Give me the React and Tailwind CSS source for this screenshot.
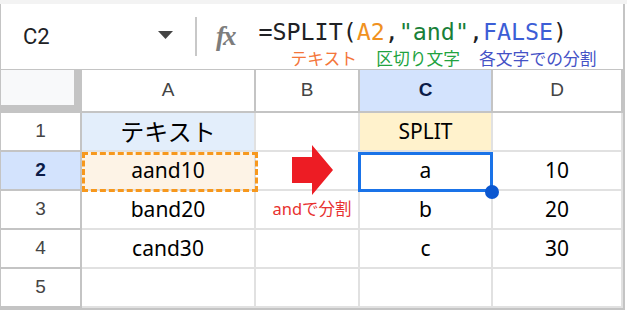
import React from "react";

const cellFont = { fontFamily: '"Noto Sans", "Noto Sans CJK JP", sans-serif' };

const cols = [
  { key: "A", w: "w-[174px]" },
  { key: "B", w: "w-[104px]" },
  { key: "C", w: "w-[133px]" },
  { key: "D", w: "w-[130px]" },
];

const rows = [
  { n: "1", cells: [{ t: "テキスト", bg: "bg-[#e3eefb]", size: "text-[24px]" }, {}, { t: "SPLIT", bg: "bg-[#fff2cc]" }, {}] },
  { n: "2", active: true, cells: [{ t: "aand10", bg: "bg-[#fdf3e6]" }, {}, { t: "a" }, { t: "10" }] },
  {
    n: "3",
    cells: [
      { t: "band20" },
      { t: "andで分割", size: "text-[16.5px] pl-[10px] whitespace-nowrap", color: "text-[#e8312f]" },
      { t: "b" },
      { t: "20" },
    ],
  },
  { n: "4", cells: [{ t: "cand30" }, {}, { t: "c" }, { t: "30" }] },
  { n: "5", cells: [{}, {}, {}, {}] },
];

function FormulaBar() {
  return (
    <div className="h-[66px] flex items-stretch border-b border-[#c4c4c4]">
      <div className="w-[194px] flex items-center pl-[22px] pr-[22px] justify-between">
        <span className="text-[22px] text-[#202124]" style={{ fontFamily: '"Roboto", "Liberation Sans", sans-serif' }}>
          C2
        </span>
        <svg width="15" height="8" viewBox="0 0 15 8" className="mt-[-4px]">
          <path d="M0 0 L15 0 L7.5 8 Z" fill="#444" />
        </svg>
      </div>
      <div className="w-[2px] bg-[#c8c8c8] my-[13px]" />
      <div className="flex-1 flex items-start">
        <span
          className="mt-[19px] ml-[19px] text-[27px] text-[#7d7d7d] italic font-bold leading-none tracking-[-2px]"
          style={{ fontFamily: '"Liberation Serif", serif' }}
        >
          fx
        </span>
        <div className="ml-[24px] flex flex-col">
          <div
            className="mt-[15px] text-[23.3px] leading-[26px] text-[#202124]"
            style={{ fontFamily: '"DejaVu Sans Mono", monospace' }}
          >
            =SPLIT(<span className="text-[#f0921f]">A2</span>,<span className="text-[#188038]">"and"</span>,
            <span className="text-[#3c5ed6]">FALSE</span>)
          </div>
          <div
            className="ml-[32px] mt-[3px] flex gap-[19px] text-[16.8px] leading-[20px]"
            style={{ fontFamily: '"Noto Sans CJK JP", sans-serif' }}
          >
            <span className="text-[#f4763a]">テキスト</span>
            <span className="text-[#22a33f]">区切り文字</span>
            <span className="text-[#4552c6]">各文字での分割</span>
          </div>
        </div>
      </div>
    </div>
  );
}

function HeaderRow() {
  return (
    <div className="flex h-[43px]">
      <div className="w-[81px] bg-[#f8f9fa] border-r-[8px] border-b-[8px] border-[#c4c4c4]" />
      {cols.map((c) => (
        <div
          key={c.key}
          className={`${c.w} flex items-center justify-center border-r-2 border-b-2 border-[#c4c4c4] text-[19px] ${
            c.key === "C" ? "bg-[#d3e3fd] font-bold text-[#0b1c48]" : "text-[#444]"
          }`}
          style={{ fontFamily: '"Liberation Sans", sans-serif' }}
        >
          {c.key}
        </div>
      ))}
    </div>
  );
}

function BodyRow({ row }) {
  return (
    <div className="flex h-[39px]">
      <div
        className={`w-[81px] flex items-center justify-center border-r-2 border-b-2 border-[#c4c4c4] text-[19px] ${
          row.active ? "bg-[#d3e3fd] font-bold text-[#0b1c48]" : "text-[#444]"
        }`}
        style={{ fontFamily: '"Liberation Sans", sans-serif' }}
      >
        {row.n}
      </div>
      {row.cells.map((cell, i) => (
        <div
          key={i}
          className={`${cols[i].w} flex items-center justify-center border-r-2 border-b-2 border-[#e1e1e1] ${
            cell.size || "text-[21px]"
          } ${cell.color || "text-black"} ${cell.bg || ""}`}
          style={cellFont}
        >
          {cell.t}
        </div>
      ))}
    </div>
  );
}

export default function App() {
  return (
    <div className="relative w-[627px] h-[312px] bg-white overflow-hidden">
      <div className="h-[4px] bg-[#f3f3f3]" />
      <div className="w-[625px] border-l border-r-2 border-b-2 border-[#c4c4c4]">
        <FormulaBar />
        <HeaderRow />
        {rows.map((r) => (
          <BodyRow key={r.n} row={r} />
        ))}
      </div>

      {/* copy-source highlight */}
      <div className="absolute left-[82px] top-[152px] w-[176px] h-[40px] border-[3px] border-dashed border-[#f7981d]" />

      {/* active cell */}
      <div className="absolute left-[358px] top-[152px] w-[135px] h-[40px] border-[3px] border-[#1a73e8]" />
      <div className="absolute left-[485px] top-[185px] w-[14px] h-[14px] rounded-full bg-[#0b57d0]" />

      {/* arrow */}
      <svg className="absolute left-[292px] top-[145px]" width="42" height="51" viewBox="0 0 42 51">
        <path d="M0 12 L20 12 L20 0 L41 25 L20 50 L20 38 L0 38 Z" fill="#ed1c24" />
      </svg>
    </div>
  );
}
